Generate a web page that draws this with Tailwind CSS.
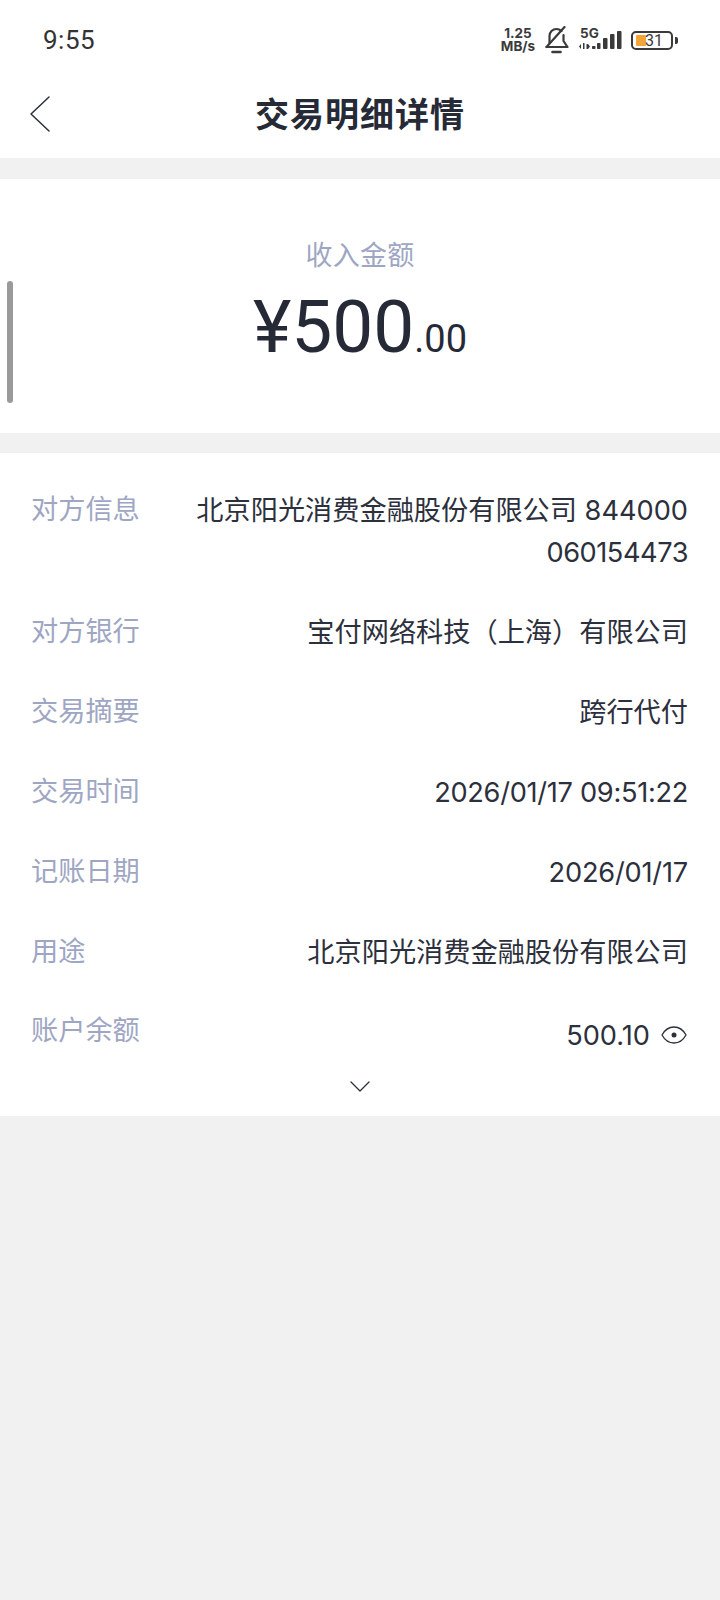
<!DOCTYPE html>
<html lang="zh-CN">
  <head>
    <meta charset="UTF-8" />
    <meta name="viewport" content="width=device-width, initial-scale=1.0" />
    <title>交易明细详情</title>
    <script src="https://cdn.jsdelivr.net/npm/@tailwindcss/browser@4"></script>
  </head>
  <body class="w-[720px] h-[1600px] bg-[#f1f1f1] text-[#2c303c] font-['Inter','Noto_Sans_CJK_SC',sans-serif] overflow-hidden relative">
    <!-- status bar -->
    <div class="h-[80px] bg-white flex items-center justify-between pl-[43px] pr-[42px]">
      <span class="text-[26px] leading-none text-[#333] font-['Roboto',sans-serif] tracking-[0.5px]">9:55</span>
      <div class="flex items-center text-[#3a3a3a]">
        <div class="flex flex-col items-center font-bold text-[13.5px] leading-[13px] font-['Inter',sans-serif] w-[38px]">
          <span>1.25</span><span>MB/s</span>
        </div>
        <svg class="ml-[6px]" width="27" height="28" viewBox="0 0 26 28" fill="none" stroke="#3a3a3a" stroke-width="2.200" stroke-linecap="round" stroke-linejoin="round">
          <path d="M6 17v-7c0-4 3-7 7-7 2 0 3.500 .7 5 2" />
          <path d="M20 9v6l4 6H3" />
          <path d="M21 1 3 21" />
          <path d="M9 26h8" stroke-width="2.600" />
        </svg>
        <div class="ml-[9px] relative w-[43px] h-[26px]">
          <span class="absolute left-[1px] top-[-1px] text-[13.5px] font-bold leading-[14px] font-['Inter',sans-serif]">5G</span>
          <svg class="absolute left-0 top-0" width="43" height="26" viewBox="0 0 43 26" fill="#3a3a3a">
            <path d="M2 17v5l-2-2.500zM4 16h1.500v6H4zM7.500 17H9v5H7.500zM9 17l2 2.500L9 22z" />
            <rect x="13" y="19" width="3.500" height="3" rx="0.800" />
            <rect x="18" y="16" width="3.500" height="6" rx="0.800" />
            <rect x="24" y="11" width="4.500" height="11" rx="1" />
            <rect x="31" y="7" width="4.500" height="15" rx="1" />
            <rect x="38" y="4" width="4.500" height="18" rx="1" />
          </svg>
        </div>
        <div class="relative ml-[9px] w-[42px] h-[19px] border-2 border-[#3a3a3a] rounded-[5px] overflow-hidden">
          <div class="absolute left-[3px] top-[2px] w-[10px] h-[11px] bg-[#f2a63a] rounded-[1px]"></div>
          <span class="absolute left-[12px] top-[-1px] text-[16px] leading-[17px] font-['Roboto',sans-serif]">31</span>
        </div>
        <div class="w-[3px] h-[7px] bg-[#3a3a3a] ml-[2px] rounded-r-[2px]"></div>
      </div>
    </div>

    <!-- header -->
    <div class="h-[78px] bg-white relative flex items-center justify-center">
      <svg class="absolute left-[28px] top-[15px]" width="24" height="38" viewBox="0 0 24 38" fill="none" stroke="#2c303c" stroke-width="1.500" stroke-linecap="round" stroke-linejoin="round">
        <path d="M21 2 3 19l18 17" />
      </svg>
      <h1 class="text-[34px] leading-none font-bold tracking-[1px] mt-[-12px] font-['Noto_Sans_CJK_SC',sans-serif] text-[#262a36]">交易明细详情</h1>
    </div>

    <!-- amount -->
    <div class="mt-[21px] h-[254px] bg-white flex flex-col items-center">
      <p class="mt-[57px] text-[27px] leading-[36px] text-[#9ea6c3] font-['Noto_Sans_CJK_SC',sans-serif] tracking-[0.3px]">收入金额</p>
      <p class="mt-[15px] leading-[80px] font-['Roboto',sans-serif] text-[#262a36]"><span class="text-[73px]">¥500</span><span class="text-[38px]">.00</span></p>
    </div>

    <!-- details -->
    <div class="mt-[20px] h-[663px] bg-white pt-[37px] pl-[31px] pr-[32px] text-[27.2px] leading-[42px] relative">
      <div class="flex flex-col gap-[38px]">
        <div class="flex justify-between gap-[40px]">
          <span class="shrink-0 text-[#9ea6c3] mt-[-1px]">对方信息</span>
          <span class="text-right">北京阳光消费金融股份有限公司 844000<br /><span class="tracking-[-0.45px]">060154473</span></span>
        </div>
        <div class="flex justify-between">
          <span class="text-[#9ea6c3] mt-[-1px]">对方银行</span>
          <span>宝付网络科技（上海）有限公司</span>
        </div>
        <div class="flex justify-between">
          <span class="text-[#9ea6c3] mt-[-1px]">交易摘要</span>
          <span>跨行代付</span>
        </div>
        <div class="flex justify-between">
          <span class="text-[#9ea6c3] mt-[-1px]">交易时间</span>
          <span class="tracking-[-0.3px]">2026/01/17 09:51:22</span>
        </div>
        <div class="flex justify-between">
          <span class="text-[#9ea6c3] mt-[-1px]">记账日期</span>
          <span class="tracking-[-0.2px]">2026/01/17</span>
        </div>
        <div class="flex justify-between">
          <span class="text-[#9ea6c3] mt-[-1px]">用途</span>
          <span>北京阳光消费金融股份有限公司</span>
        </div>
        <div class="flex justify-between">
          <span class="text-[#9ea6c3] mt-[-2px]">账户余额</span>
          <span class="flex items-center gap-[11px] mt-[3px] mr-[1px]">500.10
            <svg width="26" height="20" viewBox="0 0 26 20" fill="none" stroke="#2c303c" stroke-width="1.300" class="mt-[-2px]">
              <path d="M1 10C4 4.500 8 2 13 2s9 2.500 12 8c-3 5.500-7 8-12 8S4 15.500 1 10Z" stroke-linejoin="round" />
              <circle cx="13" cy="10" r="2.500" fill="#2c303c" stroke="none" />
            </svg>
          </span>
        </div>
      </div>
      <svg class="absolute left-[349px] top-[627px]" width="22" height="14" viewBox="0 0 22 14" fill="none" stroke="#2c303c" stroke-width="1.300" stroke-linecap="round" stroke-linejoin="round">
        <path d="M2 2l9 9 9-9" />
      </svg>
    </div>

    <!-- scroll indicator -->
    <div class="absolute left-[7px] top-[281px] w-[6px] h-[122px] rounded-[3px] bg-[#9a9a9a]"></div>
  </body>
</html>
